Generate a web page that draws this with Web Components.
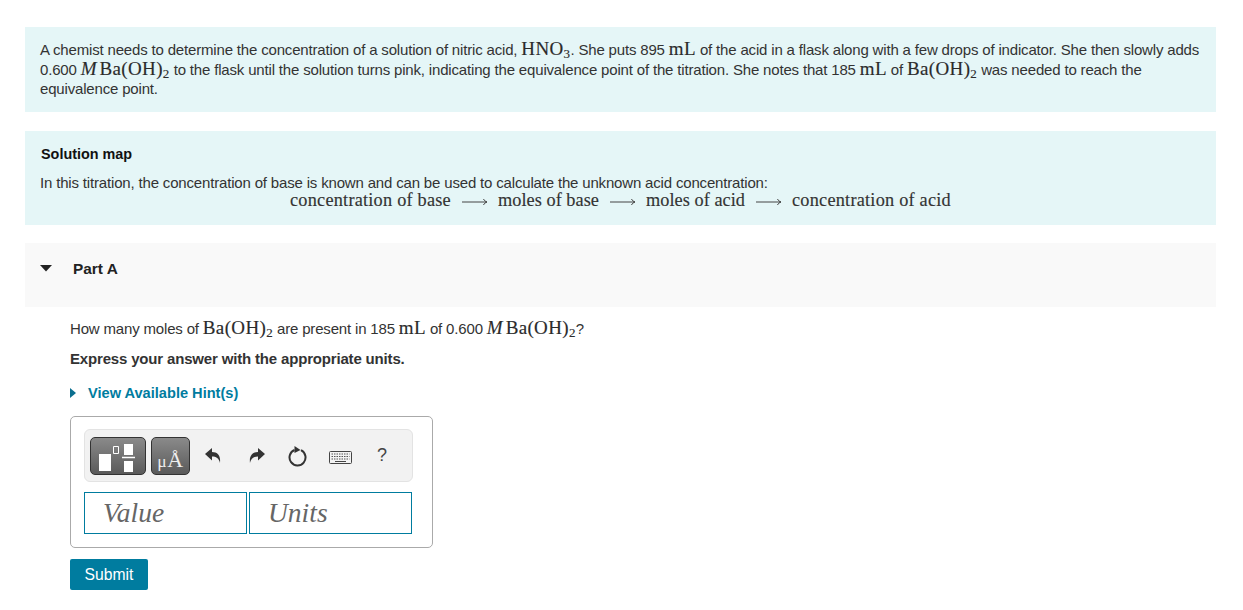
<!DOCTYPE html>
<html lang="en"><head><meta charset="utf-8"><title>Titration</title>
<style>
html,body{margin:0;background:#fff}
body{font:15px/19px "Liberation Sans",Arial,sans-serif;letter-spacing:-.17px;color:#333;width:1243px;height:610px;overflow:hidden}
</style></head><body>
<quiz-page>
  <info-panel pad="13px 15px 0 15px" style="height:85px">
    <div style="margin-bottom:1px">A chemist needs to determine the concentration of a solution of nitric acid, <m-x>HNO<sub>3</sub></m-x>. She puts 895 <m-x>mL</m-x> of the acid in a flask along with a few drops of indicator. She then slowly adds</div>
    <div>0.600 <m-x><i>M</i>Ba(OH)<sub>2</sub></m-x> to the flask until the solution turns pink, indicating the equivalence point of the titration. She notes that 185 <m-x>mL</m-x> of <m-x>Ba(OH)<sub>2</sub></m-x> was needed to reach the</div>
    <div>equivalence point.</div>
  </info-panel>
  <info-panel pad="14px 15px 0 15px" style="height:94px;margin-top:19px">
    <div style="font:700 14.4px/19px 'Liberation Sans',Arial,sans-serif;letter-spacing:0;color:#111;padding-left:1px;margin-bottom:10px">Solution map</div>
    <div style="line-height:18px">In this titration, the concentration of base is known and can be used to calculate the unknown acid concentration:</div>
    <flow-map></flow-map>
  </info-panel>
  <part-head>Part A</part-head>
  <part-body>
    <div>How many moles of <m-x>Ba(OH)<sub>2</sub></m-x> are present in 185 <m-x>mL</m-x> of 0.600 <m-x><i>M</i>Ba(OH)<sub>2</sub></m-x>?</div>
    <div style="font-weight:700;margin-top:11px">Express your answer with the appropriate units.</div>
    <hint-link>View Available Hint(s)</hint-link>
    <answer-box></answer-box>
    <submit-btn>Submit</submit-btn>
  </part-body>
</quiz-page>
<script>
function def(name, css, html){
  customElements.define(name, class extends HTMLElement{
    constructor(){super();const r=this.attachShadow({mode:'open'});r.innerHTML='<style>'+css+'</style>'+html;}
    connectedCallback(){ if(this.hasAttribute('pad')) this.style.padding=this.getAttribute('pad'); }
  });
}
def('quiz-page',':host{display:block;padding:27px 27px 0 25px}','<slot></slot>');
def('info-panel',':host{display:block;background:#e5f6f7;box-sizing:border-box;color:#333}','<slot></slot>');
def('m-x',`:host{display:inline;font-family:"Liberation Serif","Times New Roman",serif;font-size:19px;letter-spacing:.35px;color:#2b2b2b;line-height:0;-webkit-text-stroke:.15px #2b2b2b}
  ::slotted(sub){font-size:13px;line-height:0;vertical-align:-3px}
  ::slotted(i){letter-spacing:0;margin-right:3px}`,'<slot></slot>');
def('flow-map',`:host{display:flex;align-items:center;padding-left:250px;height:17px;
   font:18.300px/17px "Liberation Serif","Times New Roman",serif;color:#333;white-space:nowrap;-webkit-text-stroke:.15px #333}
  svg{margin:2px 10px 0 11px;flex:none}
  .c{letter-spacing:.22px}.m{letter-spacing:.04px}`,
  (()=>{const a='<svg width="26" height="8" viewBox="0 0 26 8"><path d="M0 4H25M21.500 1C22.300 2.600 23.500 3.500 25 4C23.500 4.500 22.300 5.400 21.500 7" fill="none" stroke="#444" stroke-width="1"/></svg>';
  return '<span class="c">concentration of base</span>'+a+'<span class="m">moles of base</span>'+a+'<span class="m">moles of acid</span>'+a+'<span class="c">concentration of acid</span>';})());
def('part-head',`:host{display:flex;align-items:center;background:#f9f9f9;height:64px;margin-top:18px;font-weight:700;font-size:15.400px;letter-spacing:0;color:#222;padding:0 0 14px 15px;box-sizing:border-box}
  svg{margin-right:21px;flex:none}`,
  '<svg width="12" height="7" viewBox="0 0 12 7"><path d="M0 0H12L6 6.500Z" fill="#222"/></svg><slot></slot>');
def('part-body',':host{display:block;padding:12px 0 0 45px}','<slot></slot>');
def('hint-link',`:host{display:flex;align-items:center;margin-top:16px;color:#007c9f;font-weight:700;font-size:14.600px;letter-spacing:0}
  svg{margin-right:12px;flex:none;margin-top:-2px}`,
  '<svg width="6" height="10" viewBox="0 0 6 10"><path d="M0 0L6 5L0 10Z" fill="#0b6f8f"/></svg><slot></slot>');
def('answer-box',`:host{display:block;box-sizing:border-box;width:363px;height:132px;margin-top:13px;border:1px solid #aaa;border-radius:5px;padding:12px 19px 0 13px;letter-spacing:0}
  .bar{display:flex;align-items:center;height:53px;box-sizing:border-box;background:#f2f2f2;border:1px solid #e3e3e3;border-radius:6px;padding-left:5px}
  .tb{box-sizing:border-box;height:38px;border:1px solid #333;border-radius:5px;background:linear-gradient(#8a8a8a,#5a5a5a);flex:none;display:flex;align-items:center;justify-content:center}
  .a{width:56px;margin-right:5px}.b{width:39px;margin-right:15px}
  .mu{font:17.500px/1 "Liberation Serif",serif;color:#eee;padding-top:8px;letter-spacing:.5px}
  .ic{display:flex;flex:none;margin-top:1px}
  .q{font:18px "Liberation Sans",sans-serif;color:#444}
  .in{display:flex;gap:2px;margin:10px 0 0 0}
  .f{box-sizing:border-box;width:163px;height:42px;border:1px solid #007c9f;font:italic 27.500px/39px "Liberation Serif","Times New Roman",serif;color:#666;padding-left:18px;background:#fff}`,
  `<div class="bar">
    <div class="tb a"><svg width="54" height="36" viewBox="0 0 54 36">
      <path d="M8 16H20V33H8Z" fill="#fff"/><path d="M22.500 8.500H27.500V15.500H22.500Z" fill="none" stroke="#fff"/>
      <path d="M33 6H42V17H33ZM33 23H42V34H33Z" fill="#fff"/><path d="M31 19.500H44" stroke="#fff" stroke-width="1.500"/></svg></div>
    <div class="tb b"><span class="mu">μ<span style="font-size:22px">Å</span></span></div>
    <span class="ic" style="margin-right:26px;margin-top:3px"><svg width="17" height="20" viewBox="0 0 17 20"><path d="M0 7L7 1V5C12 5 16 8 15 16C14 11 11 9.500 7 9.500V13.500Z" fill="#333"/></svg></span>
    <span class="ic" style="margin-right:23px;margin-top:3px"><svg width="17" height="20" viewBox="0 0 17 20"><path d="M17 7L10 1V5C5 5 1 8 2 16C3 11 6 9.500 10 9.500V13.500Z" fill="#333"/></svg></span>
    <span class="ic" style="margin-right:22px"><svg width="19" height="22" viewBox="0 0 19 22"><path d="M13 5.200A8 8 0 1 1 6.500 5" fill="none" stroke="#333" stroke-width="2"/><path d="M6.500 1L12.500 5L6.500 8Z" fill="#333"/></svg></span>
    <span class="ic" style="margin-right:25px;margin-top:3px"><svg width="23" height="13" viewBox="0 0 23 13"><rect x=".5" y=".5" width="22" height="12" rx="1" fill="#f3f3f3" stroke="#444"/><path d="M2.500 3H20.500M2.500 5.500H20.500M2.500 8H20.500" stroke="#555" stroke-dasharray="1.500 1"/><path d="M6 10.500H17" stroke="#444"/></svg></span>
    <span class="q">?</span>
  </div>
  <div class="in"><div class="f">Value</div><div class="f">Units</div></div>`);
def('submit-btn',`:host{display:flex;align-items:center;justify-content:center;width:78px;height:31px;margin-top:11px;background:#007c9f;border-radius:2px;color:#fff;font-size:15.700px;letter-spacing:0}`,'<slot></slot>');
</script>
</body></html>
